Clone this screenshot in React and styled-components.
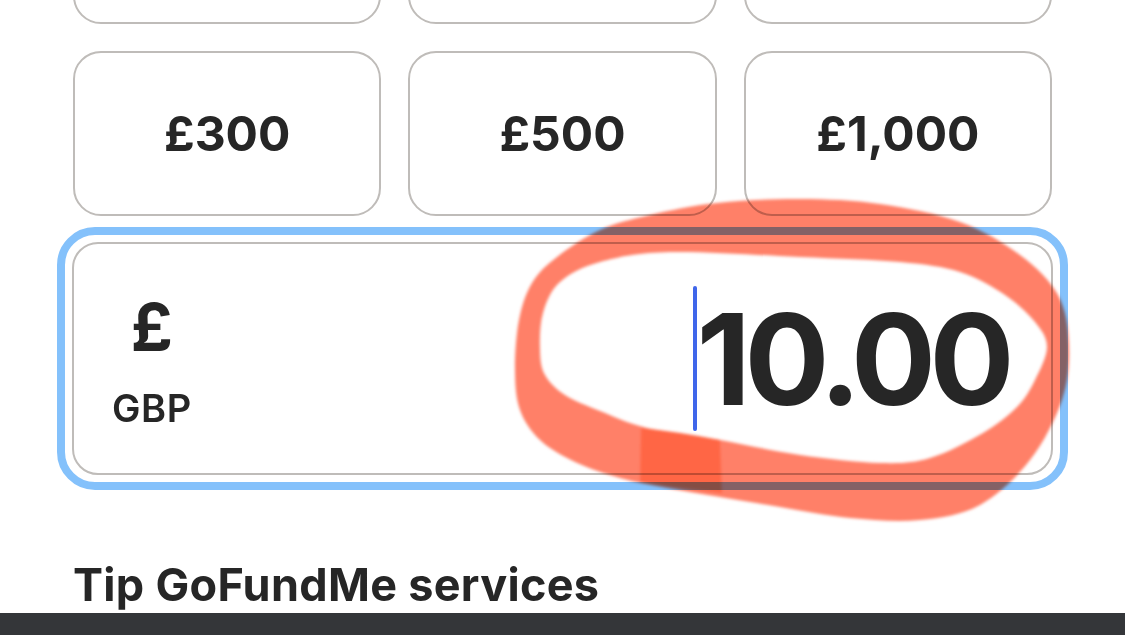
import React from 'react'
import styled, { createGlobalStyle } from 'styled-components'

const GlobalStyle = createGlobalStyle`
    html, body {
        margin: 0;
        padding: 0;
        background: #ffffff;
        overflow: hidden;
    }
    body {
        font-family: Inter, "Noto Sans", sans-serif;
        color: #262626;
    }
`

const Page = styled.div`
    position: relative;
    width: 1125px;
    height: 635px;
    overflow: hidden;
    display: flex;
    flex-direction: column;
`

const Content = styled.div`
    flex: 1;
    padding: 0 73px;
    overflow: hidden;
`

const Presets = styled.div`
    display: grid;
    grid-template-columns: repeat(3, 1fr);
    grid-auto-rows: 165px;
    gap: 27px;
    margin-top: -141px;
`

const Preset = styled.button`
    display: flex;
    align-items: center;
    justify-content: center;
    background: #ffffff;
    border: 2px solid #bfbcb9;
    border-radius: 28px;
    font-family: Inter, sans-serif;
    font-size: 48px;
    font-weight: 700;
    color: #262626;
    padding: 0;
`

const FocusRing = styled.div`
    margin: 11px -16px 0;
    border: 8px solid #84c1fb;
    border-radius: 38px;
    padding: 7px;
`

const AmountBox = styled.div`
    display: flex;
    align-items: center;
    justify-content: space-between;
    height: 229px;
    border: 2px solid #bfbcb9;
    border-radius: 26px;
    padding: 0 43px 0 38px;
`

const Currency = styled.div`
    display: flex;
    flex-direction: column;
    align-items: center;
    gap: 29px;
    margin-top: 4px;
`

const Symbol = styled.span`
    font-size: 66px;
    font-weight: 700;
    line-height: 1;
`

const Code = styled.span`
    font-size: 38px;
    font-weight: 600;
    line-height: 1;
    letter-spacing: 0.6px;
`

const Value = styled.div`
    display: flex;
    align-items: center;
    font-size: 126px;
    font-weight: 700;
    line-height: 1;
    letter-spacing: -6.5px;
`

const Caret = styled.span`
    display: inline-block;
    flex-shrink: 0;
    width: 4px;
    height: 145px;
    border-radius: 2px;
    background: #3f66ea;
    margin-right: 0;
    position: relative;
    z-index: 1;
`

const Heading = styled.h2`
    margin: 72px 0 0;
    font-size: 45px;
    font-weight: 700;
    line-height: 1;
    letter-spacing: 0.3px;
`

const BottomBar = styled.div`
    height: 22px;
    background: #343639;
    flex-shrink: 0;
`

const Markup = styled.svg`
    position: absolute;
    top: 0;
    left: 0;
    pointer-events: none;
    mix-blend-mode: multiply;
    z-index: 2;
`

// closed catmull-rom curve through the traced points
function smooth(pts) {
    const n = pts.length
    let d = `M${pts[0][0]},${pts[0][1]}`
    for (let i = 0; i < n; i++) {
        const p0 = pts[(i - 1 + n) % n]
        const p1 = pts[i]
        const p2 = pts[(i + 1) % n]
        const p3 = pts[(i + 2) % n]
        const c1 = [p1[0] + (p2[0] - p0[0]) / 6, p1[1] + (p2[1] - p0[1]) / 6]
        const c2 = [p2[0] - (p3[0] - p1[0]) / 6, p2[1] - (p3[1] - p1[1]) / 6]
        d += ` C${c1[0]},${c1[1]} ${c2[0]},${c2[1]} ${p2[0]},${p2[1]}`
    }
    return d + 'Z'
}

const outer = [
    [515, 370], [519, 320], [532, 283], [557, 257], [600, 230], [650, 215],
    [717, 203], [800, 199], [880, 204], [960, 222], [1020, 255], [1058, 295],
    [1069, 345], [1062, 400], [1030, 460], [980, 505], [920, 520], [850, 518],
    [780, 507], [720, 497], [667, 488], [620, 478], [575, 462], [540, 440],
    [520, 410],
]

const inner = [
    [540, 350], [543, 313], [560, 282], [600, 262], [670, 252], [800, 257],
    [900, 262], [960, 272], [1005, 295], [1035, 322], [1047, 347], [1035, 380],
    [1017, 407], [983, 433], [930, 458], [880, 463], [800, 455], [720, 440],
    [647, 428], [600, 411], [565, 395], [545, 375],
]

// the first row sits above the fold, only its bottom edge shows
const presets = [
    { id: 'a' }, { id: 'b' }, { id: 'c' },
    { id: 'd', label: '£300' }, { id: 'e', label: '£500' }, { id: 'f', label: '£1,000' },
]

function Annotation() {
    return (
        <Markup width="1125" height="635" viewBox="0 0 1125 635">
            <defs>
                <filter id="soft" x="-5%" y="-5%" width="110%" height="110%">
                    <feGaussianBlur stdDeviation="1.4" />
                </filter>
            </defs>
            <g filter="url(#soft)">
                <path d={smooth(outer) + ' ' + smooth(inner)} fill="#ff8068" fillRule="evenodd" />
                <path d="M641,428 Q680,432 720,440 L722,493 Q680,488 640,482 Z" fill="#ff6644" />
            </g>
        </Markup>
    )
}

export default function App() {
    return (
        <Page>
            <GlobalStyle />
            <Content>
                <Presets>
                    {presets.map((p) => (
                        <Preset key={p.id}>{p.label}</Preset>
                    ))}
                </Presets>
                <FocusRing>
                    <AmountBox>
                        <Currency>
                            <Symbol>£</Symbol>
                            <Code>GBP</Code>
                        </Currency>
                        <Value>
                            <Caret />
                            10.00
                        </Value>
                    </AmountBox>
                </FocusRing>
                <Heading>Tip GoFundMe services</Heading>
            </Content>
            <BottomBar />
            <Annotation />
        </Page>
    )
}
